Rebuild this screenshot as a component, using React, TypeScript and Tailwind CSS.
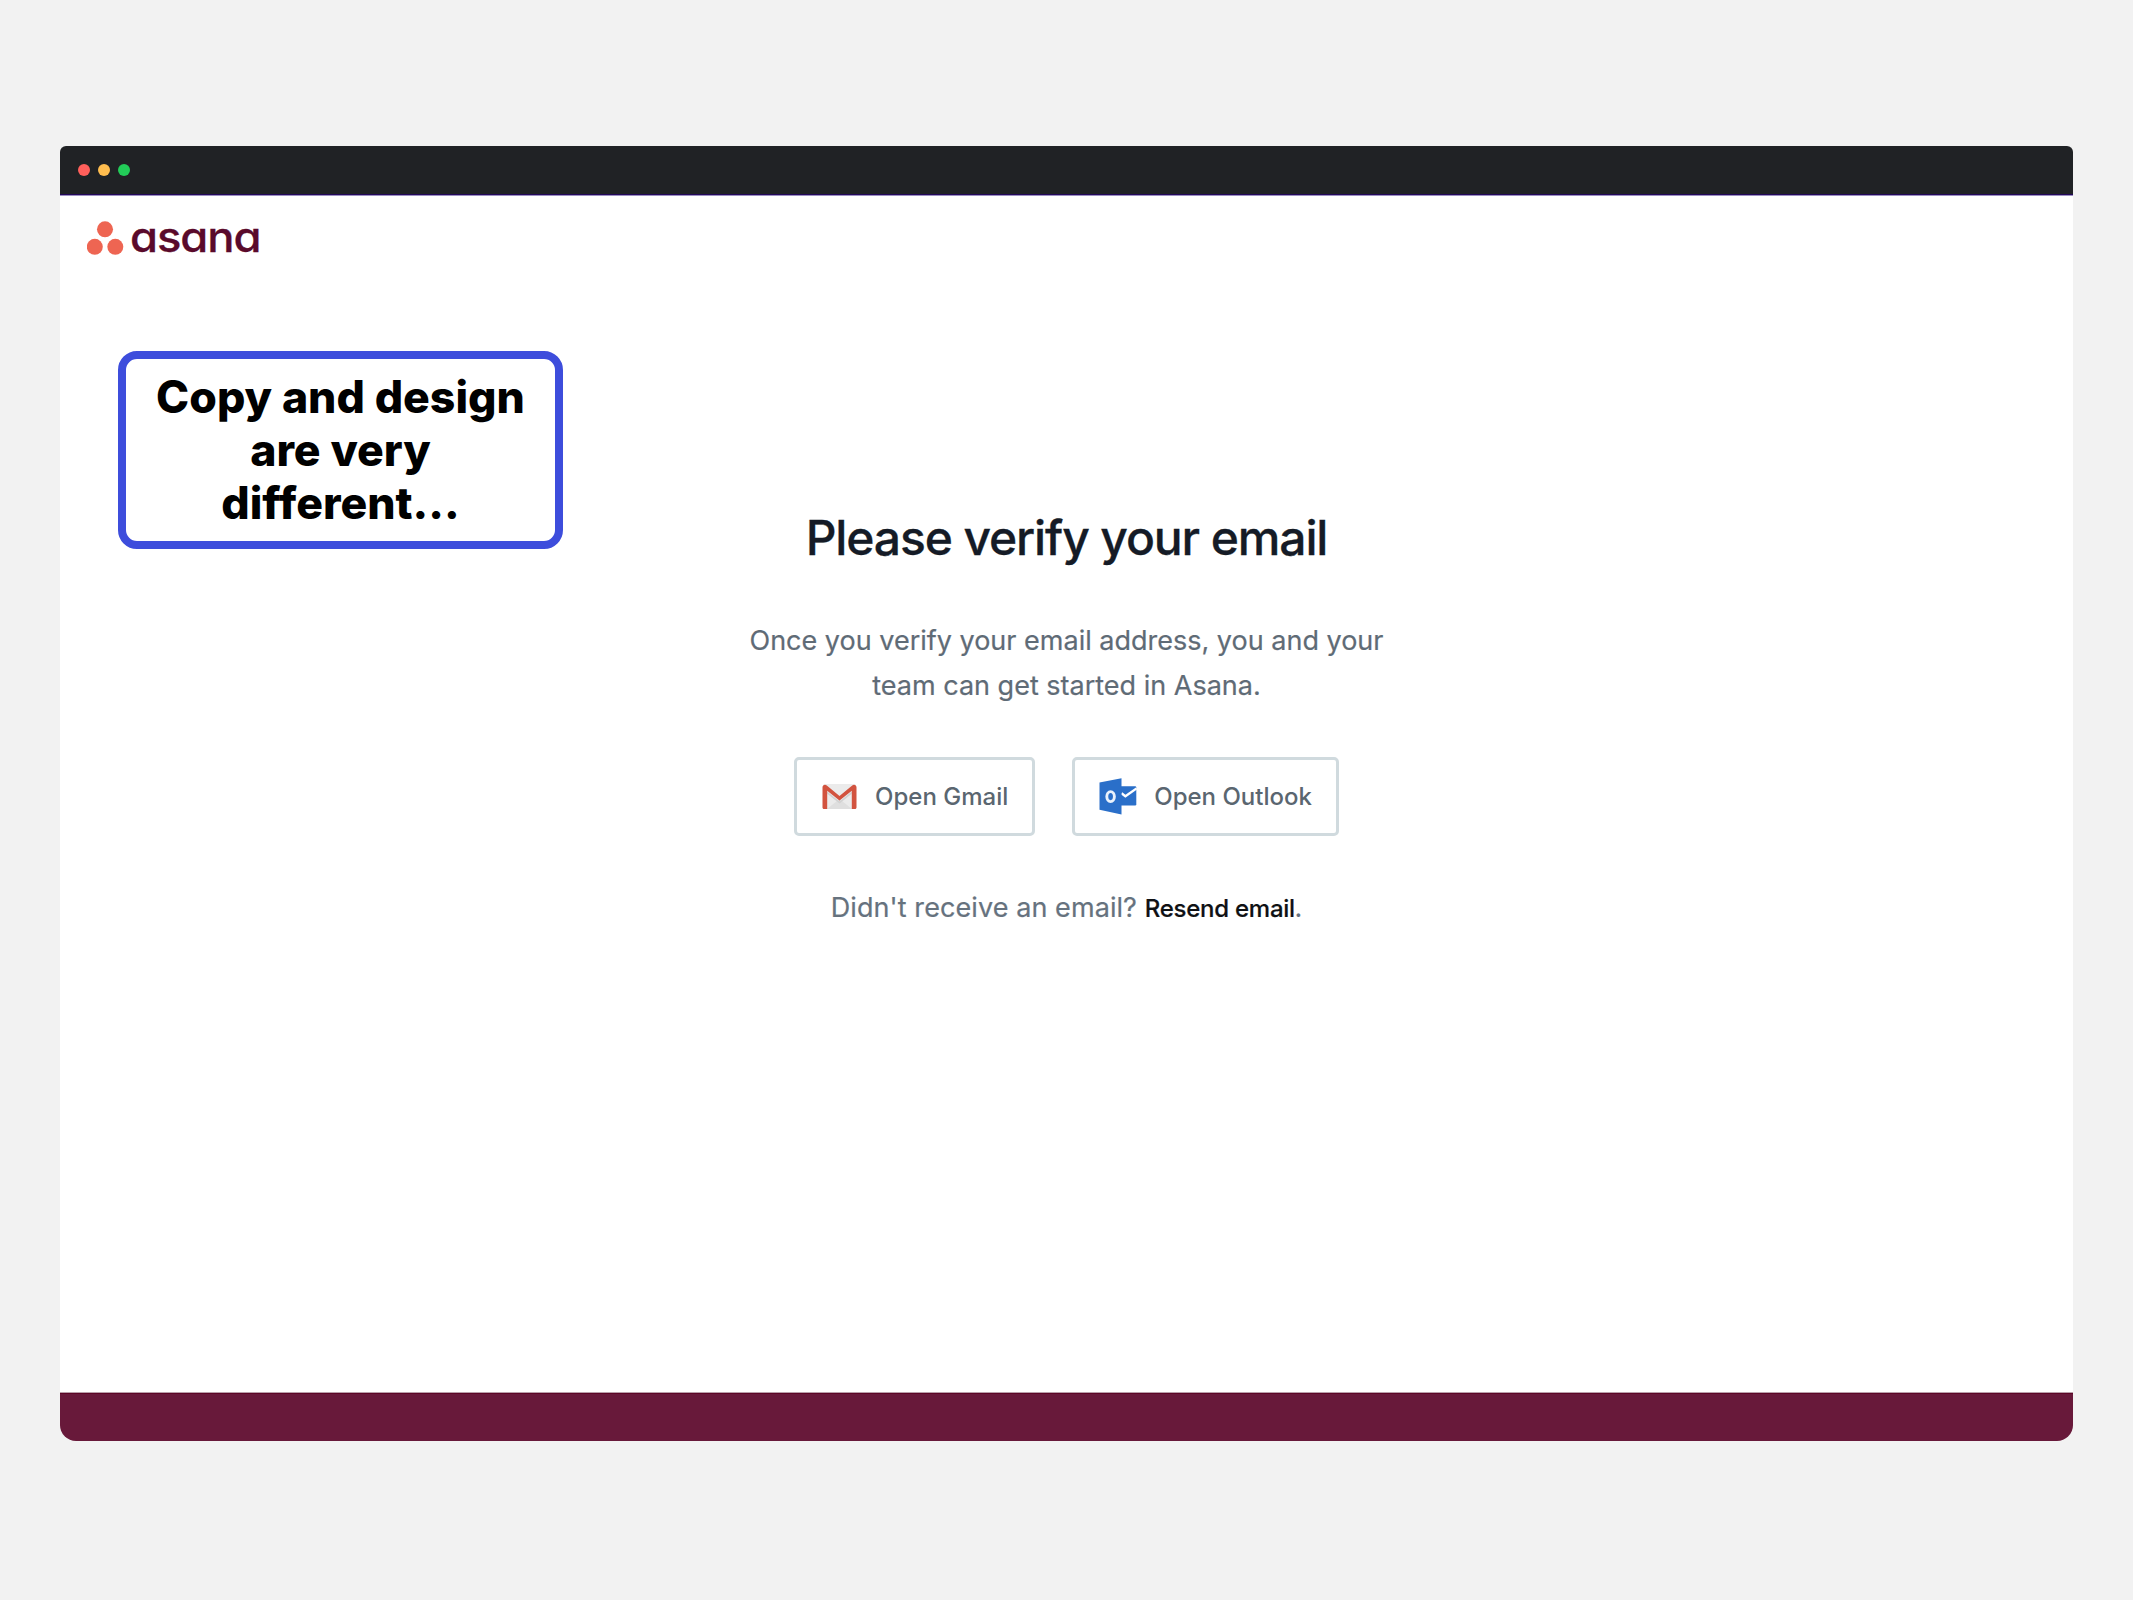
import type { ReactNode } from "react";

function AsanaMark() {
  return (
    <svg width="37" height="34" viewBox="0 0 37 34" fill="#ee6552">
      <circle cx="18" cy="8.300" r="8" />
      <circle cx="7.800" cy="25.800" r="8" />
      <circle cx="28.300" cy="25.800" r="8" />
    </svg>
  );
}

function GmailIcon() {
  return (
    <svg width="35" height="25" viewBox="0 0 35 25" preserveAspectRatio="none">
      <rect x="1" y="0" width="33" height="25" rx="2" fill="#ebebeb" />
      <path d="M5 25 17.500 15 30 25z" fill="#dfdfdf" />
      <path d="M5.200 7.500 17.500 17.500 29.800 7.500v2.200L17.500 19.500 5.200 9.700z" fill="#d2d2d2" />
      <path
        d="M0.500 3.200C0.500 1 3 0 4.800 1.400L17.500 12 30.200 1.400C32 0 34.500 1 34.500 3.200V23.500c0 .9-.6 1.500-1.500 1.500h-3.200V6.800L17.500 16.400 5.200 6.800V25H2C1.100 25 .5 24.400.5 23.500z"
        fill="#d2533f"
      />
    </svg>
  );
}

function OutlookIcon() {
  return (
    <svg width="38" height="37" viewBox="0 0 38 37">
      <rect x="20" y="8.200" width="17.300" height="19.300" rx="1.200" fill="#2a6fc9" />
      <path d="M22.500 15.200 26.400 18.200 37.600 10.400" fill="none" stroke="#fff" strokeWidth="2.400" />
      <path d="M0.500 4.500 22.500 0.300V36.500L0.500 31.800z" fill="#2a6fc9" />
      <ellipse cx="11.600" cy="18.600" rx="3.800" ry="5" fill="none" stroke="#eaf2fc" strokeWidth="2.900" />
    </svg>
  );
}

function MailButton({ icon, label }: { icon: ReactNode; label: string }) {
  return (
    <button className="flex h-[79px] items-center rounded-[5px] border-[3px] border-[#d0dade] bg-white pr-[24px] text-[24px] leading-[30px] font-medium text-[#5a6670]">
      {icon}
      <span>{label}</span>
    </button>
  );
}

export default function App() {
  return (
    <div className="flex h-[1600px] w-[2133px] flex-col bg-[#f2f2f2] px-[60px] pt-[146px] font-['Inter',sans-serif]">
      <div className="relative flex h-[1295px] flex-col overflow-hidden rounded-t-[6px] rounded-b-[16px] bg-white">
        <div className="flex h-[49px] shrink-0 items-center gap-[8px] border-b border-[#23095a] bg-[#202225] pl-[18px]">
          <span className="size-[12px] rounded-full bg-[#ff5f5b]" />
          <span className="size-[12px] rounded-full bg-[#ffbd4f]" />
          <span className="size-[12px] rounded-full bg-[#22cc58]" />
        </div>
        <header className="flex h-[91px] shrink-0 items-start border-t border-[#9c8fc0] pt-[25px] pl-[27px]">
          <AsanaMark />
          <span className="mt-[-9px] ml-[6px] origin-left scale-x-[1.080] text-[42px] leading-[50px] font-medium tracking-[-1px] text-[#5a0a2b] [-webkit-text-stroke:0.300px_#5a0a2b] [font-feature-settings:'cv11']">
            asana
          </span>
        </header>

        <main className="flex grow flex-col items-center pt-[222px]">
          <h1 className="text-[48px] leading-[60px] font-medium tracking-[-1.120px] text-[#151b26] [-webkit-text-stroke:0.300px_#151b26]">
            Please verify your email
          </h1>
          <p className="mt-[50px] text-center text-[27px] leading-[45px] text-[#5f6b76] [-webkit-text-stroke:0.200px_#5f6b76]">
            Once you verify your email address, you and your
            <br />
            team can get started in Asana.
          </p>
          <div className="mt-[49px] flex gap-[37px]">
            <MailButton icon={<span className="mr-[18px] ml-[25px]"><GmailIcon /></span>} label="Open Gmail" />
            <MailButton icon={<span className="mr-[17px] ml-[24px]"><OutlookIcon /></span>} label="Open Outlook" />
          </div>
          <p className="mt-[49px] text-[27px] leading-[45px] tracking-[0.080px] text-[#66727e] [-webkit-text-stroke:0.200px_#66727e]">
            Didn't receive an email?{" "}
            <a className="text-[24px] font-medium tracking-[-0.250px] text-[#0f1114] [-webkit-text-stroke:0.200px_#0f1114]">Resend email</a>
            <span className="text-[24px] font-medium">.</span>
          </p>
        </main>

        <footer className="h-[49px] shrink-0 border-t border-[#b9a0aa] bg-[#68193a]">
          <div className="h-px bg-[#5c0526]" />
        </footer>

        <aside className="absolute top-[205px] left-[58px] flex h-[198px] w-[445px] items-center justify-center rounded-[19px] border-[8px] border-[#3d4ddc] bg-white pt-px text-center text-[44.600px] leading-[53.200px] font-extrabold text-black">
          <p>
            Copy and design
            <br />
            are very
            <br />
            different...
          </p>
        </aside>
      </div>
    </div>
  );
}
